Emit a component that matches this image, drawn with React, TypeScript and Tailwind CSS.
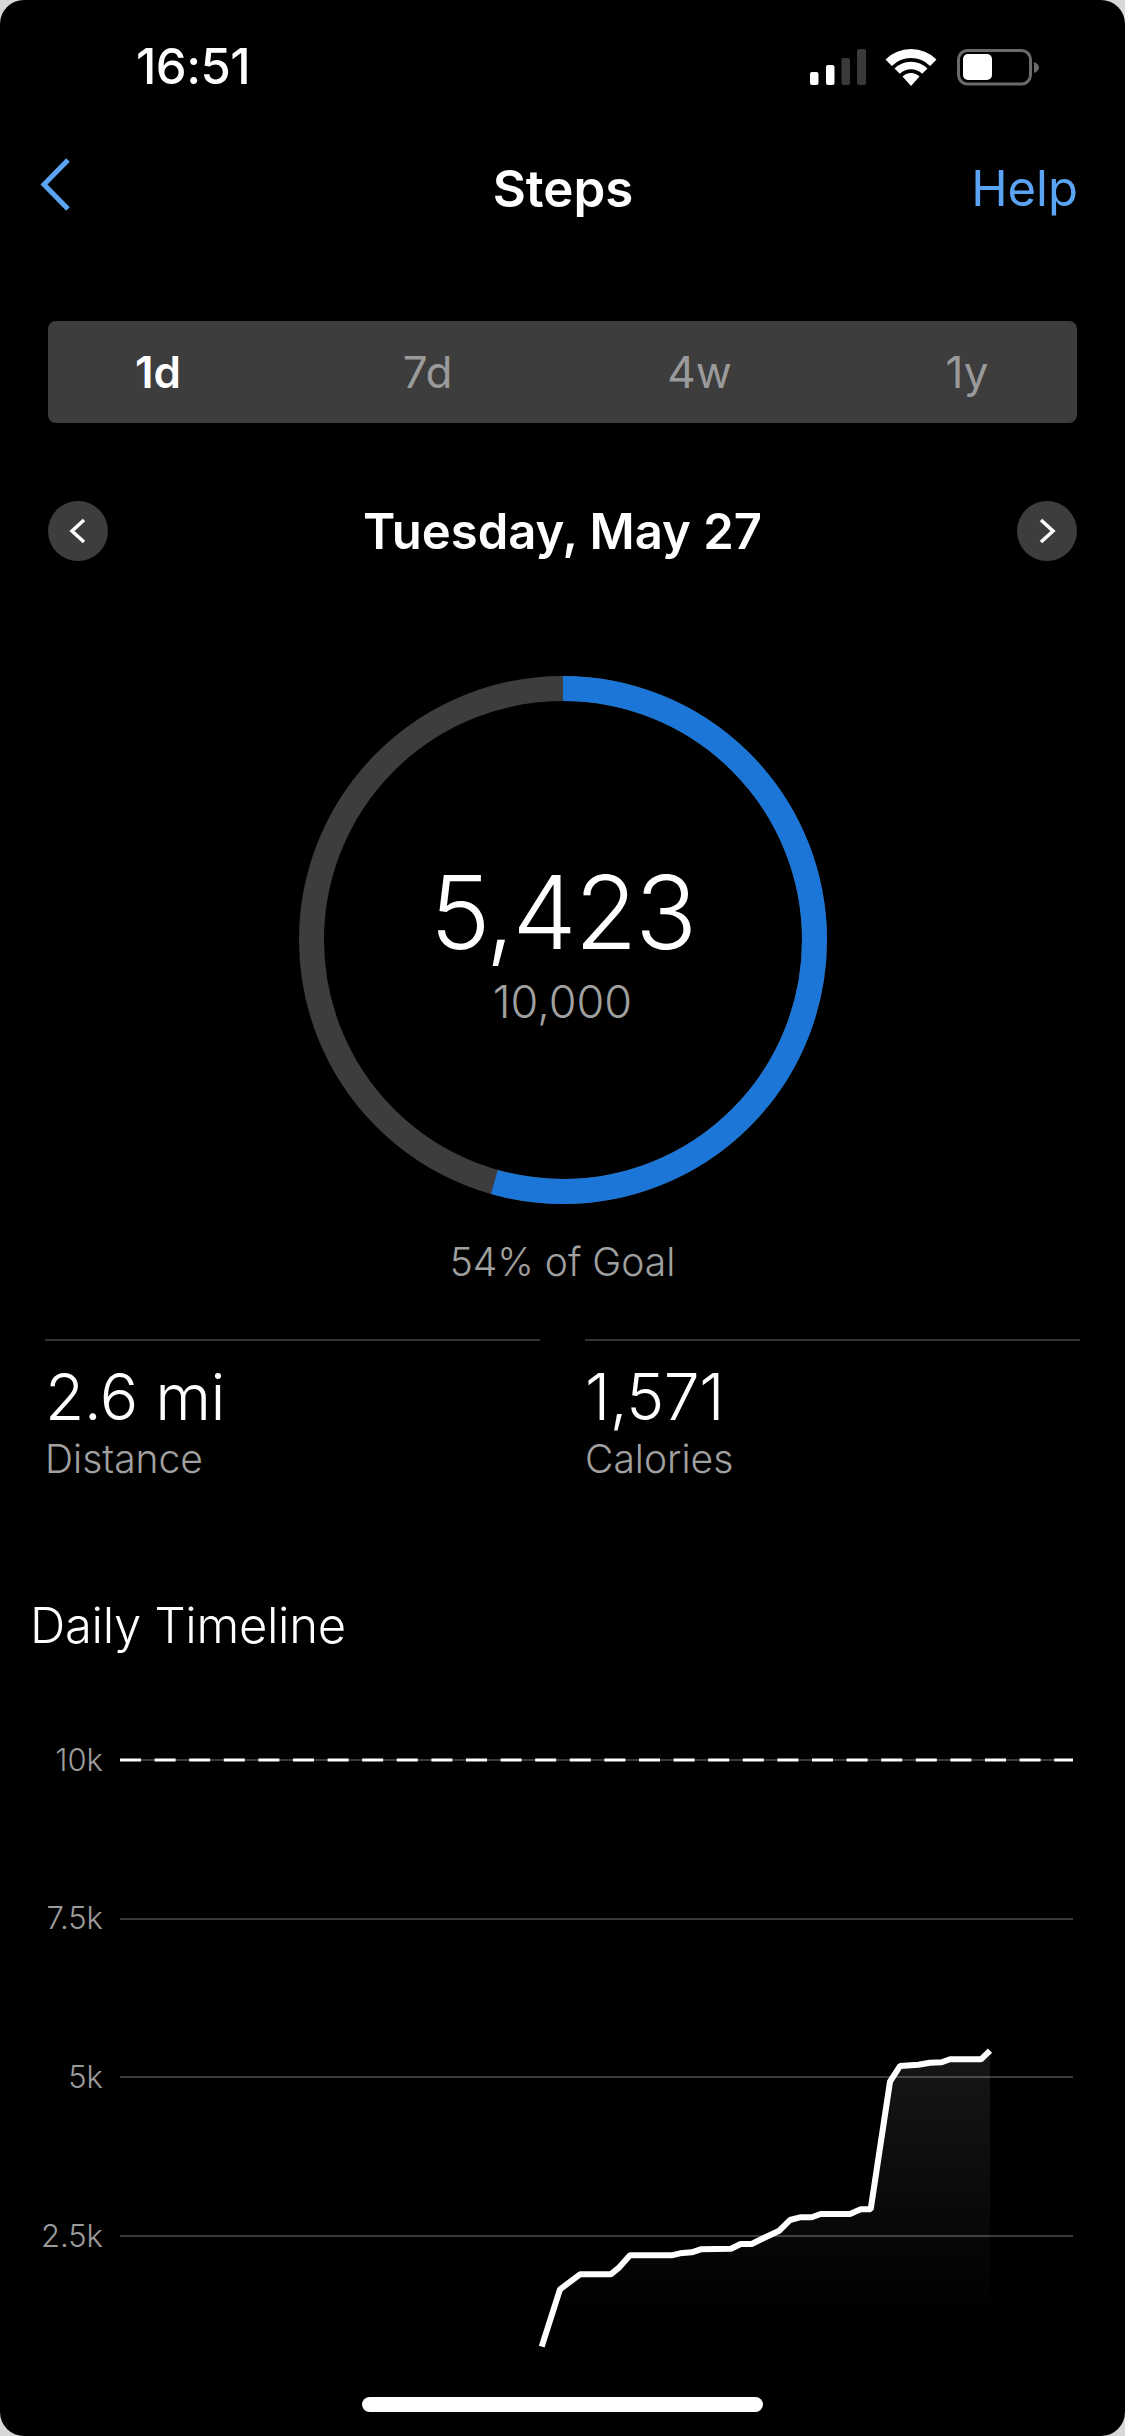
import React from 'react';

const FONT = "font-['Inter','Liberation_Sans',sans-serif]";

const TABS = ['1d', '7d', '4w', '1y'];
const GRID = ['10k', '7.5k', '5k', '2.5k'];

// daily step curve, page coordinates
const CURVE: [number, number][] = [
  [541.7, 2346.7], [560, 2289.3], [580, 2274.3], [610.7, 2274.3], [619.3, 2267.3], [630, 2255.3],
  [671.7, 2255.3], [680, 2253.3], [691.7, 2252.3], [700.7, 2249.3], [731, 2248.7], [740.7, 2244],
  [751.7, 2244], [763.3, 2238.3], [779.3, 2230.7], [790, 2220], [800, 2217.3], [811.7, 2217.3],
  [820.7, 2214], [850, 2214], [860.7, 2209.3], [870.7, 2209.3], [890, 2081.7], [900, 2066],
  [918.3, 2064.7], [930, 2062.7], [941.7, 2062.3], [950, 2059.3], [981, 2059.3], [990, 2050.7],
];

const linePoints = CURVE.map(p => p.join(',')).join(' ');
const areaPoints = `${linePoints} 990,2347 541.7,2347`;

function StatusIcons() {
  return (
    <svg width="232" height="40" viewBox="810 46 232 40" fill="none">
      <rect x="811" y="71" width="8.5" height="13" rx="2" fill="#fff" />
      <rect x="827" y="64" width="8.5" height="20" rx="2" fill="#fff" />
      <rect x="842.5" y="57" width="8.5" height="27" rx="2" fill="#3a3a3a" />
      <rect x="858" y="48" width="9" height="36" rx="2" fill="#3a3a3a" />
      <path d="M889.7 61.7 A31.5 31.5 0 0 1 934.3 61.7" stroke="#fff" strokeWidth="9" />
      <path d="M898.2 70.2 A19.5 19.5 0 0 1 925.8 70.2" stroke="#fff" strokeWidth="7.5" />
      <path d="M912 85 L903.5 75.5 A12 12 0 0 1 920.5 75.5 Z" fill="#fff" />
      <rect x="959.5" y="49.5" width="72" height="33.5" rx="9" stroke="#6b6b6b" strokeWidth="3" />
      <rect x="964" y="53" width="29" height="26" rx="5" fill="#fff" />
      <path d="M1035 61 C1038 62 1040 64 1040 66.5 C1040 69 1038 71 1035 72 Z" fill="#6b6b6b" />
    </svg>
  );
}

function RoundArrow({ d }: { d: string }) {
  return (
    <button className="w-[60px] h-[60px] rounded-full bg-[#3d3d3d] flex items-center justify-center">
      <svg width="60" height="60" viewBox="0 0 60 60" fill="none">
        <path d={d} stroke="#fff" strokeWidth="3.5" />
      </svg>
    </button>
  );
}

function Stat({ value, label }: { value: string; label: string }) {
  return (
    <div className="border-t-2 border-[#333333]">
      <div className="text-[64px] leading-[74px] mt-[19px] font-[350] text-white tracking-[-0.5px]">{value}</div>
      <div className="text-[39px] leading-[46px] mt-[2px] font-[350] text-[#a0a0a0]">{label}</div>
    </div>
  );
}

export default function App() {
  return (
    <div className={`w-[1125px] h-[2436px] bg-[#d8d8d8] ${FONT}`}>
      <div className="relative w-full h-full bg-black rounded-[24px] overflow-hidden">
        {/* Status bar */}
        <div className="h-[134px] flex items-center justify-between pl-[136px] pr-[84px]">
          <span className="text-[49px] font-medium text-white tracking-[-0.5px]">16:51</span>
          <StatusIcons />
        </div>

        {/* Nav */}
        <div className="h-[110px] grid grid-cols-[1fr_auto_1fr] items-center pl-[40px] pr-[47px]">
          <svg width="32" height="54" viewBox="0 0 32 54" fill="none" className="-mt-[8px]">
            <path d="M28 2 L4 26.5 L28 51" stroke="#5ba4f3" strokeWidth="5" />
          </svg>
          <span className="text-[51px] font-semibold text-white ml-[8px]">Steps</span>
          <span className="text-[49px] text-[#5ba4f3] font-normal justify-self-end">Help</span>
        </div>

        {/* Range tabs */}
        <div className="mt-[77px] mx-[48px] h-[102px] rounded-[8px] bg-[#3d3d3d] flex items-center justify-between px-[80px]">
          {TABS.map((t, i) => (
            <span
              key={t}
              className={`w-[60px] text-center text-[44px] ${i === 0 ? 'font-semibold text-white' : 'font-normal text-[#9a9a9a]'}`}
            >
              {t}
            </span>
          ))}
        </div>

        {/* Date row */}
        <div className="mt-[78px] mx-[48px] h-[60px] flex items-center justify-between">
          <RoundArrow d="M36 19 L24 30 L36 41" />
          <span className="text-[49px] font-semibold text-white mt-[2px]">Tuesday, May 27</span>
          <RoundArrow d="M24 19 L36 30 L24 41" />
        </div>

        {/* Goal ring */}
        <div className="relative mt-[115px] mx-auto w-[528px] h-[528px]">
          <svg width="528" height="528" viewBox="0 0 528 528" fill="none" className="-rotate-90">
            <circle cx="264" cy="264" r="251.5" stroke="#3d3d3d" strokeWidth="25" />
            <circle cx="264" cy="264" r="251.5" stroke="#1b76d8" strokeWidth="25" pathLength={100} strokeDasharray="54.4 100" />
          </svg>
          <div className="absolute inset-0 flex flex-col items-center pt-[174px]">
            <span className="text-[102px] leading-[124px] font-[350] text-white tracking-[-2px]">5,423</span>
            <span className="text-[45px] leading-[54px] mt-[1px] font-[350] text-[#a0a0a0]">10,000</span>
          </div>
        </div>
        <div className="mt-[35px] text-center text-[39px] leading-[46px] font-[350] text-[#a0a0a0]">54% of Goal</div>

        {/* Distance + calories */}
        <div className="mt-[54px] mx-[45px] grid grid-cols-2 gap-[45px]">
          <Stat value="2.6 mi" label="Distance" />
          <Stat value="1,571" label="Calories" />
        </div>

        <div className="mt-[115px] pl-[30px] text-[49px] leading-[58px] font-[350] text-white tracking-[-0.3px]">Daily Timeline</div>

        {/* Timeline chart */}
        <div className="absolute left-0 top-[1759px] w-[1125px] h-[677px]">
          <div className="flex flex-col gap-[156.7px]">
            {GRID.map((label, i) => (
              <div key={label} className="h-[2px] flex items-center">
                <span className="w-[103px] shrink-0 text-right text-[31px] font-[350] text-[#9b9b9b]">{label}</span>
                {i === 0 ? (
                  <svg width="953" height="4" viewBox="0 0 953 4" className="ml-[17px]">
                    <rect x="0" y="1" width="953" height="2" fill="#3a3a3a" />
                    <line x1="0" y1="2" x2="953" y2="2" stroke="#fff" strokeWidth="3" strokeDasharray="21 13.6" />
                  </svg>
                ) : (
                  <div className="ml-[17px] w-[953px] h-[2px] bg-[#3a3a3a]" />
                )}
              </div>
            ))}
          </div>
          <svg width="1125" height="677" viewBox="0 1759 1125 677" fill="none" className="absolute left-0 top-0">
            <defs>
              <linearGradient id="stepFill" gradientUnits="userSpaceOnUse" x1="0" y1="2050" x2="0" y2="2320">
                <stop offset="0" stopColor="#fff" stopOpacity="0.09" />
                <stop offset="1" stopColor="#fff" stopOpacity="0" />
              </linearGradient>
            </defs>
            <polygon points={areaPoints} fill="url(#stepFill)" />
            <polyline points={linePoints} stroke="#fff" strokeWidth="6" strokeLinejoin="bevel" />
          </svg>
        </div>

        {/* Home indicator */}
        <div className="absolute left-[362px] bottom-[24px] w-[401px] h-[15px] rounded-full bg-white" />
      </div>
    </div>
  );
}
